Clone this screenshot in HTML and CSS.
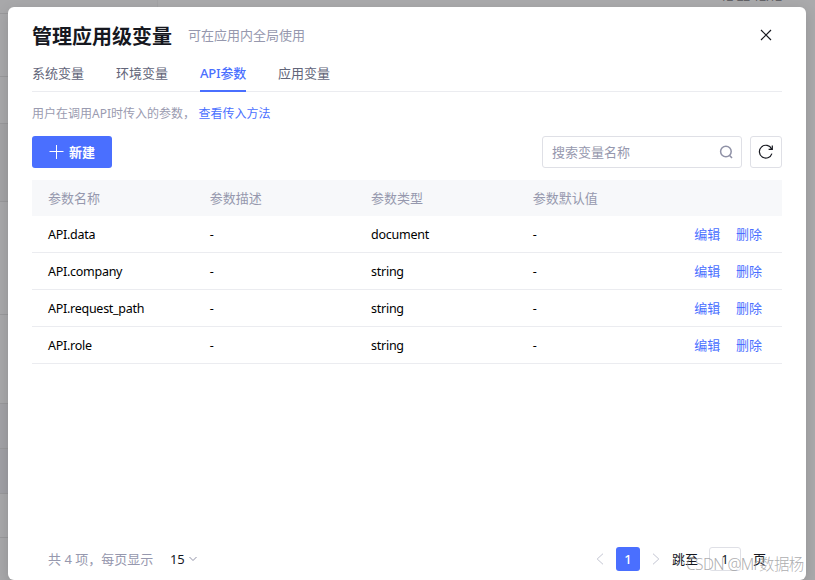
FILE: index.html
```html
<!DOCTYPE html>
<html lang="zh-CN">
<head>
<meta charset="utf-8">
<title>管理应用级变量</title>
<link rel="stylesheet" href="styles.css">
</head>
<body>
<div class="backdrop" aria-hidden="true">
  <div class="bg-side"><i class="r1"></i><i class="r2"></i><i class="r3"></i><i class="r4"></i><i class="r5"></i><i class="r6"></i><i class="r7"></i><i class="r8"></i><i class="r9"></i></div>
  <span class="bg-time">12-22 12:12</span>
</div>
<section class="modal">
  <header class="head">
    <h1>管理应用级变量</h1>
    <span class="sub">可在应用内全局使用</span>
    <svg class="close" width="12" height="12" viewBox="0 0 12 12"><path d="M1 1l10 10M11 1L1 11"/></svg>
  </header>
  <nav class="tabs">
    <a>系统变量</a><a>环境变量</a><a class="active">API参数</a><a>应用变量</a>
  </nav>
  <p class="hint"><span class="hint-text">用户在调用API时传入的参数，</span><a>查看传入方法</a></p>
  <div class="toolbar">
    <button class="create"><svg width="14" height="14" viewBox="0 0 14 14"><path d="M7.5 0v14M.5 6.5h14"/></svg><span>新建</span></button>
    <div class="search"><span>搜索变量名称</span><svg width="14" height="14" viewBox="0 0 14 14"><circle cx="6.9" cy="6.5" r="5.3"/><path d="M10.6 10.4l2.4 2.6"/></svg></div>
    <button class="refresh"><svg width="16" height="16" viewBox="0 0 16 16"><path d="M13.9 9.6A6.4 6.4 0 1 1 13.6 5M14.3 1.6V5.3H10.6"/></svg></button>
  </div>
  <div class="table">
    <div class="row th"><span>参数名称</span><span>参数描述</span><span>参数类型</span><span>参数默认值</span><span></span></div>
    <div class="row"><span>API.data</span><span>-</span><span>document</span><span>-</span><span class="ops"><a>编辑</a><a>删除</a></span></div>
    <div class="row"><span>API.company</span><span>-</span><span>string</span><span>-</span><span class="ops"><a>编辑</a><a>删除</a></span></div>
    <div class="row"><span>API.request_path</span><span>-</span><span>string</span><span>-</span><span class="ops"><a>编辑</a><a>删除</a></span></div>
    <div class="row"><span>API.role</span><span>-</span><span>string</span><span>-</span><span class="ops"><a>编辑</a><a>删除</a></span></div>
  </div>
  <footer class="foot">
    <span class="total">共 4 项，每页显示</span>
    <span class="size">15</span>
    <svg class="down" width="8" height="6" viewBox="0 0 8 6"><path d="M.5 1L4 4.5 7.5 1"/></svg>
    <svg class="prev" width="8" height="12" viewBox="0 0 8 12"><path d="M7 .7L1.2 6 7 11.3"/></svg>
    <span class="page">1</span>
    <svg class="next" width="8" height="12" viewBox="0 0 8 12"><path d="M1 .7L6.8 6 1 11.3"/></svg>
    <span class="jump">跳至</span>
    <span class="input">1</span>
    <span>页</span>
  </footer>
</section>
<span class="watermark">CSDN @Mr数据杨</span>
</body>
</html>
```
FILE: styles.css
```css
* { box-sizing: border-box; }
body {
  margin: 0;
  width: 815px;
  height: 580px;
  overflow: hidden;
  position: relative;
  background: #aaaaac;
  color: #16181f;
  font: 13px/20px "Noto Sans", "Noto Sans CJK SC", sans-serif;
}
h1, p { margin: 0; }
button { padding: 0; font: inherit; }
svg { fill: none; flex: none; display: block; }
.backdrop { position: absolute; inset: 0; }
.bg-side {
  display: flex;
  flex-direction: column;
  width: 158px;
  height: 580px;
  background: #a8a8aa;
  border-right: 1px solid #a3a3a5;
}
.bg-side i { flex: none; border-bottom: 1px solid #99999b; }
.r1 { height: 14px; }
.r2 { height: 63px; }
.r3 { height: 47px; }
.r4 { height: 78px; background: #a3a3a5; }
.r5 { height: 113px; }
.r6 { height: 89px; }
.r7 { height: 45px; background: #a2a2a6; }
.r8 { height: 45px; background: #a0a0a5; }
.r9 { height: 44px; }
.bg-time { position: absolute; left: 720px; top: -12px; font-size: 12px; line-height: 18px; letter-spacing: -.3px; color: #626266; white-space: nowrap; }
.modal {
  position: absolute;
  left: 8px;
  top: 7px;
  width: 798px;
  height: 573px;
  padding: 0 24px;
  display: flex;
  flex-direction: column;
  background: #fff;
  border-radius: 6px;
  box-shadow: 0 4px 14px rgba(0, 0, 0, .14);
}
.head { display: flex; align-items: center; height: 50px; padding: 7px 10px 0 0; flex: none; }
h1 { font-size: 20px; line-height: 30px; font-weight: 700; padding-top: 2px; }
.sub { margin-left: 16px; margin-top: -1px; color: #9698ae; }
.close { margin: -1px 0 0 auto; stroke: #16181f; stroke-width: 1.2; }
.tabs { display: flex; gap: 32px; height: 35px; border-bottom: 1px solid #ebecf0; color: #626579; flex: none; }
.tabs a { height: 35px; padding-top: 6px; }
.tabs .active { width: 46px; letter-spacing: -.2px; white-space: nowrap; color: #4a6fff; font-weight: 500; border-bottom: 2px solid #4a6fff; }
.hint { display: flex; height: 44px; flex: none; padding-top: 12px; font-size: 12px; color: #9a9bb0; }
.hint-text { width: 166.5px; white-space: nowrap; }
.hint a { color: #4a6fff; }
.toolbar { display: flex; height: 32px; flex: none; }
.toolbar > * { border: 1px solid #dfe0e6; border-radius: 3px; background: #fff; display: flex; align-items: center; }
.toolbar .create { width: 80px; border: 0; background: #4a6fff; color: #fff; font-weight: 700; justify-content: center; gap: 6px; }
.create svg { stroke: #fff; stroke-width: 1; overflow: visible; }
.search { width: 200px; margin-left: auto; padding: 0 8px 0 9px; justify-content: space-between; color: #9698ae; }
.search svg { stroke: #8f91a6; stroke-width: 1.5; }
.refresh { width: 32px; margin-left: 8px; justify-content: center; }
.refresh svg { stroke: #16181f; stroke-width: 1.2; }
.table { margin-top: 12px; }
.row {
  display: grid;
  grid-template-columns: 161.7px 161.4px 161.7px 161.6px 1fr;
  align-items: center;
  height: 37px;
  padding: 0 0 0 16px;
  border-bottom: 1px solid #ebecf0;
  color: #000;
  font-size: 12.5px;
  line-height: 22px;
  letter-spacing: -.27px;
}
.row:not(.th) > span:not(.ops) { padding-top: 2px; }
.row.th { height: 36px; line-height: 20px; background: #f7f8fa; color: #9698ae; border: 0; font-size: 13px; letter-spacing: 0; }
.ops { display: flex; gap: 15.5px; color: #4a6fff; font-size: 13px; line-height: 20px; letter-spacing: 0; }
.foot { display: flex; align-items: center; height: 24px; margin: auto 0 9px; padding: 0 16px; flex: none; }
.total { width: 122px; color: #9698ae; white-space: nowrap; }
.size { letter-spacing: -.2px; }
.down { margin-left: 5px; stroke: #8f91a6; }
.prev { margin-left: auto; stroke: #c3c5d2; }
.page { width: 24px; height: 24px; margin: 0 12px; border-radius: 3px; background: #4a6fff; color: #fff; line-height: 24px; text-align: center; font-weight: 500; }
.next { stroke: #c3c5d2; }
.jump { margin-left: 12px; }
.input { width: 32px; height: 24px; margin: 0 12px 0 11px; border: 1px solid #dfe0e6; border-radius: 3px; line-height: 22px; text-align: center; }
.watermark { position: absolute; left: 686px; top: 553px; font: 300 15.5px/22px "Noto Sans", "Noto Sans CJK SC", sans-serif; letter-spacing: -.6px; color: rgba(145, 145, 148, .75); white-space: nowrap; }
```
